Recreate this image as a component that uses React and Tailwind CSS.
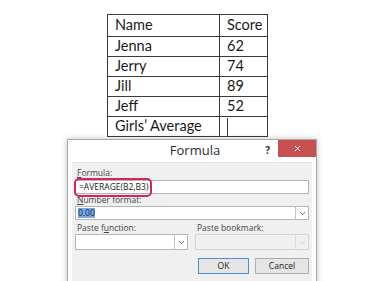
import { ChevronDown, X } from "lucide-react";

const data = [
  { name: "Jenna", score: "62" },
  { name: "Jerry", score: "74" },
  { name: "Jill", score: "89" },
  { name: "Jeff", score: "52" },
];

function Label({ children, className = "" }) {
  return <div className={`text-[8.5px] leading-[10px] text-[#444] ${className}`}>{children}</div>;
}

function Select({ className = "", disabled = false, children }) {
  return (
    <div className={`flex items-center border ${disabled ? "border-[#d4d4d4] bg-[#f0f0f0]" : "border-[#b5b5b5] bg-white"} ${className}`}>
      <div className="flex-1 h-full flex items-center pl-[2px]">{children}</div>
      <div className={`w-[13px] h-full flex items-center justify-center border-l ${disabled ? "border-[#dcdcdc] text-[#c4c4c4]" : "border-[#c8c8c8] text-[#333]"}`}>
        <ChevronDown size={9} strokeWidth={2} />
      </div>
    </div>
  );
}

export default function App() {
  return (
    <div className="w-[375px] h-[281px] bg-white overflow-hidden" style={{ fontFamily: '"Open Sans", "Noto Sans", sans-serif' }}>
      <table className="ml-[107px] mt-[14px] border-collapse text-[14.5px] text-[#1a1a1a]" style={{ fontFamily: 'Lato, "Open Sans", sans-serif' }}>
        <tbody>
          <tr className="h-[22px]">
            <td className="w-[112px] border border-[#3a3a3a] pl-[7px] leading-none">Name</td>
            <td className="w-[48px] border border-[#3a3a3a] pl-[7px] leading-none">Score</td>
          </tr>
          {data.map((r) => (
            <tr key={r.name} className="h-[20px]">
              <td className="border border-[#3a3a3a] pl-[7px] leading-none">{r.name}</td>
              <td className="border border-[#3a3a3a] pl-[7px] leading-none">{r.score}</td>
            </tr>
          ))}
          <tr className="h-[20px]">
            <td className="border border-[#3a3a3a] pl-[7px] leading-none">Girls’ Average</td>
            <td className="border border-[#3a3a3a] pl-[7px] leading-none">
              <div className="w-px h-[18px] bg-[#3a3a3a]" />
            </td>
          </tr>
        </tbody>
      </table>

      <div className="ml-[67px] mt-[2px] w-[250px] h-[160px] border border-[#a8a8a8] bg-white shadow-[0_0_6px_rgba(0,0,0,0.25)]">
        <div className="flex h-[21px]">
          <div className="flex-1" />
          <div className="text-[13px] leading-[21px] text-[#2b2b2b] pl-[6px]">Formula</div>
          <div className="flex-1 flex justify-end items-start">
            <span className="text-[10px] font-bold text-[#333] mt-[3px] mr-[8px]">?</span>
            <div className="w-[38px] h-[17px] bg-[#c75050] flex items-center justify-center text-white">
              <X size={9} strokeWidth={2.5} />
            </div>
          </div>
        </div>
        <div className="mx-[4px] mt-[1px] h-[140px] bg-[#f0f0f0] border-t border-[#e6e6e6] px-[3px] pt-[5px]">
          <Label className="pl-[2px]"><span className="underline">F</span>ormula:</Label>
          <div className="relative mt-[2px] h-[14px] border border-[#b5b5b5] bg-white flex items-center pl-[3px] text-[8.5px] text-[#222]">
            =AVERAGE(B2,B3)
            <div className="absolute left-[-2px] top-[-3px] w-[78px] h-[19px] border-2 border-[#d4245a] rounded-[5px]" />
          </div>
          <Label className="mt-[1px] pl-[2px]"><span className="underline">N</span>umber format:</Label>
          <Select className="mt-[1px] h-[14px]">
            <span className="text-[8.5px] leading-[10px] bg-[#7aa7e0] text-[#0b2a63]">0.00</span>
          </Select>
          <div className="mt-[3px] flex gap-[7px]">
            <div className="w-[113px]">
              <Label className="pl-[2px]">Paste f<span className="underline">u</span>nction:</Label>
              <Select className="mt-[1px] h-[16px]" />
            </div>
            <div className="flex-1">
              <Label className="pl-[2px] text-[#9a9a9a]">Paste bookmark:</Label>
              <Select disabled className="mt-[1px] h-[16px]" />
            </div>
          </div>
          <div className="mt-[8px] flex justify-end gap-[6px]">
            <div className="w-[51px] h-[16px] border border-[#4a90d0] bg-[#e5e5e5] flex items-center justify-center text-[8.5px] text-[#222]">OK</div>
            <div className="w-[54px] h-[16px] border border-[#adadad] bg-[#e5e5e5] flex items-center justify-center text-[8.5px] text-[#222]">Cancel</div>
          </div>
        </div>
      </div>
    </div>
  );
}
